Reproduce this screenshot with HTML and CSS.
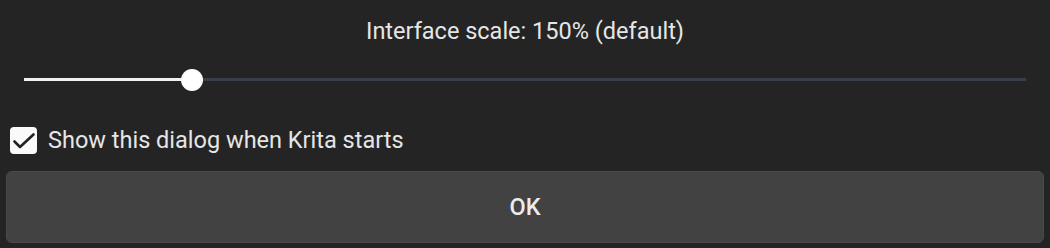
FILE: index.html
```html
<!DOCTYPE html>
<html lang="en">
<head>
    <meta charset="UTF-8">
    <meta name="viewport" content="width=device-width, initial-scale=1.0">
    <title>Interface scale</title>
    <link rel="stylesheet" href="styles.css">
</head>
<body>
    <div class="dialog">
        <div class="title">Interface scale: 150% (default)</div>

        <div class="slider">
            <div class="fill"></div>
            <div class="handle"></div>
            <div class="rest"></div>
        </div>

        <label class="check">
            <span class="box">
                <svg width="27" height="27" viewBox="0 0 27 27">
                    <path d="M4.5 14.5 L10 20 L23.5 7.5" fill="none" stroke="#222" stroke-width="2.6" stroke-linecap="round" stroke-linejoin="round"/>
                </svg>
            </span>
            <span>Show this dialog when Krita starts</span>
        </label>

        <button class="ok">OK</button>
    </div>
</body>
</html>
```

FILE: styles.css
```css
*{
    padding: 0;
    margin: 0;
    box-sizing: border-box;
}
body{
    background-color: #242424;
    font-family: Roboto, "Noto Sans", sans-serif;
    color: #e6e6e6;
    width: 1050px;
    height: 248px;
    overflow: hidden;
}
.dialog{
    display: flex;
    flex-direction: column;
    padding: 17px 6px 6px;
}
.title{
    text-align: center;
    font-size: 23.5px;
    line-height: 28px;
}
.slider{
    display: flex;
    align-items: center;
    height: 23px;
    margin: 23px 18px 0 18px;
}
.slider .fill{
    width: 159px;
    height: 3px;
    background-color: #f2f2f2;
    margin-right: -2px;
}
.slider .handle{
    width: 22px;
    height: 22px;
    border-radius: 50%;
    background-color: #fff;
    flex: none;
    position: relative;
}
.slider .rest{
    flex: 1;
    height: 3px;
    background-color: #383e4a;
}
.check{
    display: flex;
    align-items: center;
    gap: 11px;
    margin: 35px 0 0 4px;
    font-size: 23.5px;
    line-height: 28px;
}
.check .box{
    width: 27px;
    height: 27px;
    background-color: #fafafa;
    border-radius: 4px;
    display: flex;
}
.ok{
    margin-top: 17px;
    height: 72px;
    width: 100%;
    background-color: #424242;
    border: 1px solid #4a4a4a;
    border-radius: 6px;
    color: #ececec;
    font-family: Roboto, "Noto Sans", sans-serif;
    font-size: 23.5px;
    font-weight: 500;
}
```
